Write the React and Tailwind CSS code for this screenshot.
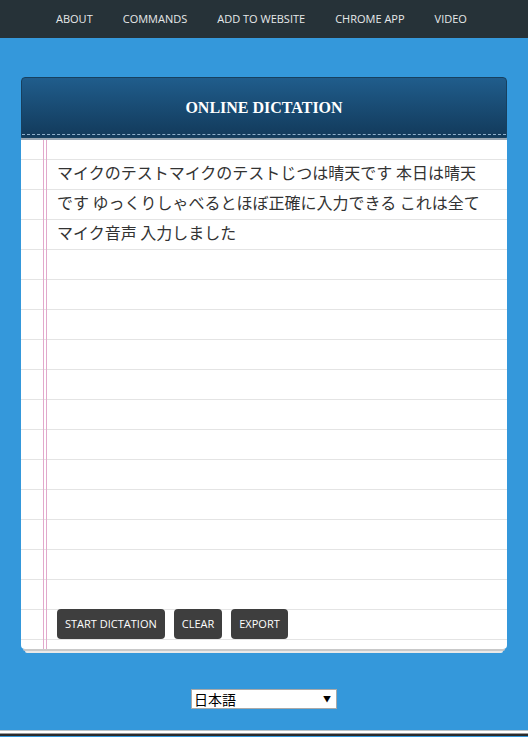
import React from "react";

const navItems = ["ABOUT", "COMMANDS", "ADD TO WEBSITE", "CHROME APP", "VIDEO"];

const App = () => {
  const text =
    "マイクのテストマイクのテストじつは晴天です 本日は晴天です ゆっくりしゃべるとほぼ正確に入力できる これは全てマイク音声 入力しました";

  return (
    <div className="w-[528px] min-h-[737px] bg-[#3498db] font-['Open_Sans',sans-serif]">
      <nav className="h-[38px] bg-[#263238] flex items-center pl-[56px] gap-[30px] text-[11px] text-[#e6e9ea]">
        {navItems.map((item) => (
          <span key={item}>{item}</span>
        ))}
      </nav>

      <div className="pt-[39px] px-[21px]">
        <div className="w-[486px]">
          {/* header */}
          <div className="h-[61px] rounded-t-[4px] border border-[#17405f] bg-gradient-to-b from-[#205d8c] to-[#123a5b] flex flex-col">
            <div className="flex-1 flex items-center justify-center pt-[3px] text-white text-[16px] font-bold font-['Liberation_Serif',serif]">
              ONLINE DICTATION
            </div>
            <div className="border-b border-dashed border-[#8fb0cc] mb-[2px]" />
          </div>

          {/* paper */}
          <div className="relative bg-white rounded-b-[4px] border-t-[2px] border-[#9aa7b3] flex h-[511px] bg-[linear-gradient(to_bottom,transparent_19px,#e4e4e4_19px,#e4e4e4_20px,transparent_20px)] bg-[length:100%_30px]">
            <div className="w-[23px] shrink-0 border-r border-[#e2a9cc]" />
            <div className="w-[3px] shrink-0 border-r border-[#e2a9cc]" />
            <div className="flex-1 flex flex-col pl-[10px] pr-[24px] pt-[17px]">
              <p className="h-[452px] text-[16px] leading-[30px] text-[#333] font-['Noto_Sans_CJK_JP',sans-serif]">
                {text}
              </p>
              <div className="flex gap-[9px] text-[11px] text-white">
                <button className="h-[30px] px-[8px] rounded-[4px] bg-[#3e3e3e]">START DICTATION</button>
                <button className="h-[30px] px-[8px] rounded-[4px] bg-[#3e3e3e]">CLEAR</button>
                <button className="h-[30px] px-[8px] rounded-[4px] bg-[#3e3e3e]">EXPORT</button>
              </div>
            </div>
          </div>
          <div className="mx-[2px] h-[2px] bg-[#c9c9c9] rounded-b-[4px]" />
          <div className="mx-[4px] h-[2px] bg-[#e9e9e9] rounded-b-[4px]" />
        </div>
      </div>

      <div className="flex justify-center pt-[36px] pb-[21px]">
        <div className="w-[146px] h-[20px] bg-white border border-[#a9a9a9] flex items-center justify-between pl-[2px] pr-[5px] text-[14px] text-black font-['Noto_Sans_CJK_JP',sans-serif]">
          <span className="leading-none">日本語</span>
          <span className="text-[8px] leading-none">▼</span>
        </div>
      </div>

      <div className="h-px bg-[#b9c3c9]" />
      <div className="h-[2px] bg-white" />
      <div className="h-px bg-[#9a9a9a]" />
      <div className="h-[2px] bg-[#2b2b2b]" />
    </div>
  );
};

export default App;
